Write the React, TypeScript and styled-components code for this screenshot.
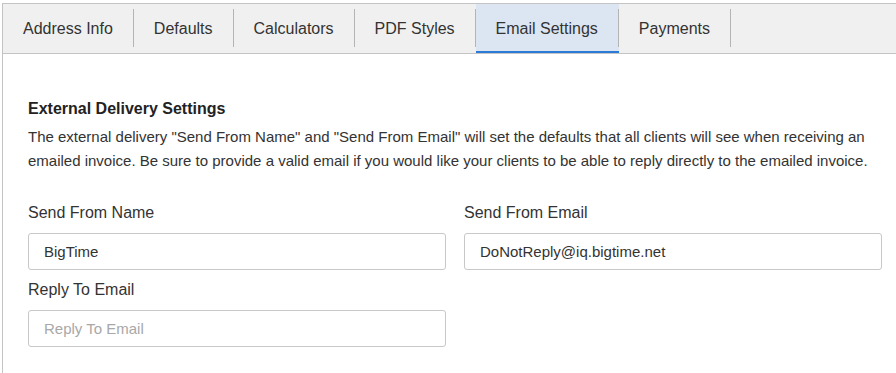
import styled, { createGlobalStyle } from "styled-components"

const GlobalStyle = createGlobalStyle`
  body {
    margin: 0;
    background: #ffffff;
    font-family: "Liberation Sans", Arial, sans-serif;
    color: #333333;
  }
`

const tabs = [
  "Address Info",
  "Defaults",
  "Calculators",
  "PDF Styles",
  "Email Settings",
  "Payments"
]

export default function App() {
  const active = "Email Settings"

  return (
    <>
      <GlobalStyle />
      <Panel>
        <TabBar>
          {tabs.map((t) => (
            <Tab key={t} $active={t === active}>
              {t}
            </Tab>
          ))}
        </TabBar>
        <Content>
          <Heading>External Delivery Settings</Heading>
          <Description>
            The external delivery "Send From Name" and "Send From Email" will
            set the defaults that all clients will see when receiving an
            emailed invoice. Be sure to provide a valid email if you would like
            your clients to be able to reply directly to the emailed invoice.
          </Description>
          <FieldGrid>
            <Field>
              <Label>Send From Name</Label>
              <Input defaultValue="BigTime" />
            </Field>
            <Field>
              <Label>Send From Email</Label>
              <Input defaultValue="DoNotReply@iq.bigtime.net" />
            </Field>
            <Field>
              <Label>Reply To Email</Label>
              <Input placeholder="Reply To Email" />
            </Field>
          </FieldGrid>
        </Content>
      </Panel>
    </>
  )
}

const Panel = styled.div`
  margin: 3px 0 0 2px;
  border-top: 1px solid #c4c4c4;
  border-left: 1px solid #c4c4c4;
  min-height: 369px;
`

const TabBar = styled.div`
  display: flex;
  height: 49px;
  background: #f0f0f0;
  border-bottom: 1px solid #c4c4c4;
`

const Tab = styled.div<{ $active?: boolean }>`
  position: relative;
  display: flex;
  align-items: center;
  padding: 0 21px 0 20px;
  font-size: 16px;
  color: #333333;
  cursor: pointer;
  background: ${(p) => (p.$active ? "#dce6f2" : "transparent")};
  box-shadow: ${(p) => (p.$active ? "inset 0 -2px 0 #2b7bd6" : "none")};

  &::after {
    content: "";
    position: absolute;
    right: 0;
    top: 5px;
    bottom: 6px;
    width: 1px;
    background: #b4b4b4;
  }
`

const Content = styled.div`
  padding: 46px 14px 0 25px;
`

const Heading = styled.h3`
  margin: 0;
  font-size: 16px;
  line-height: 18px;
  font-weight: 700;
  color: #222222;
`

const Description = styled.p`
  margin: 7px 0 0;
  font-size: 15px;
  line-height: 24px;
  color: #333333;
`

const FieldGrid = styled.div`
  display: grid;
  grid-template-columns: 1fr 1fr;
  column-gap: 18px;
  row-gap: 10px;
  margin-top: 30px;
`

const Field = styled.div`
  display: flex;
  flex-direction: column;
`

const Label = styled.label`
  font-size: 16px;
  line-height: 20px;
  color: #333333;
  margin-bottom: 10px;
`

const Input = styled.input`
  box-sizing: border-box;
  height: 37px;
  width: 100%;
  padding: 0 15px;
  border: 1px solid #c8c8c8;
  border-radius: 3px;
  font-family: "Liberation Sans", Arial, sans-serif;
  font-size: 15px;
  color: #333333;
  outline: none;

  &::placeholder {
    color: #a8a8a8;
  }
`
